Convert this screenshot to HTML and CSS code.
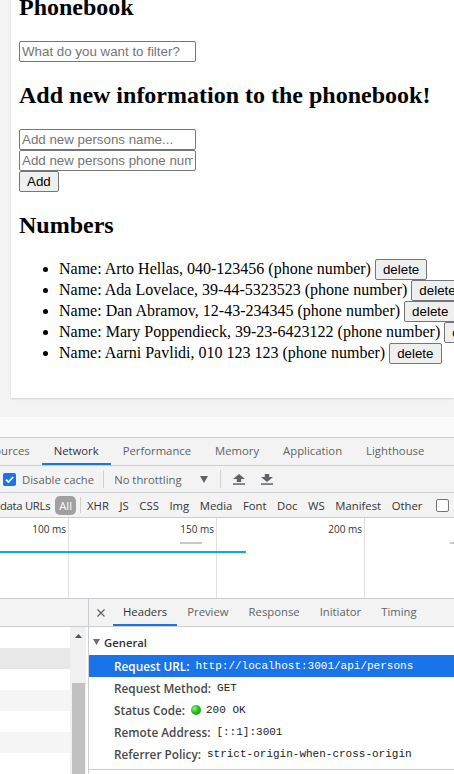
FILE: index.html
```html
<!DOCTYPE html>
<html>
<head>
<meta charset="utf-8">
<title>Phonebook</title>
<link rel="stylesheet" href="styles.css">
</head>
<body>
<div class="screen">
  <div class="viewport">
    <div class="stage">
      <div class="panel">
        <div class="panel-inner">
          <h2>Phonebook</h2>
          <div><input class="field" placeholder="What do you want to filter?"></div>
          <h2>Add new information to the phonebook!</h2>
          <form>
            <div><input class="field" placeholder="Add new persons name..."></div>
            <div><input class="field" placeholder="Add new persons phone number..."></div>
            <div><button class="btn" type="button">Add</button></div>
          </form>
          <h2>Numbers</h2>
          <ul class="list">
            <li>Name: Arto Hellas, 040-123456 (phone number) <button class="btn" type="button">delete</button></li>
            <li>Name: Ada Lovelace, 39-44-5323523 (phone number) <button class="btn" type="button">delete</button></li>
            <li>Name: Dan Abramov, 12-43-234345 (phone number) <button class="btn" type="button">delete</button></li>
            <li>Name: Mary Poppendieck, 39-23-6423122 (phone number) <button class="btn" type="button">delete</button></li>
            <li>Name: Aarni Pavlidi, 010 123 123 (phone number) <button class="btn" type="button">delete</button></li>
          </ul>
        </div>
      </div>
    </div>
  </div>

  <div class="devtools">
    <div class="tabs">
      <div class="tab first">Sources</div>
      <div class="tab active">Network</div>
      <div class="tab">Performance</div>
      <div class="tab">Memory</div>
      <div class="tab">Application</div>
      <div class="tab">Lighthouse</div>
      <div class="ext">
        <svg width="12" height="12" viewBox="0 0 12 12"><rect x="0" y="0" width="12" height="12" rx="1" fill="#6b4fd8"/><rect x="2" y="2" width="8" height="8" rx="1" fill="#8f7ae8"/><path d="M4 4h4v4H4z" fill="#e6e0ff"/></svg>
      </div>
    </div>

    <div class="toolbar">
      <span class="check on"><svg width="13" height="13" viewBox="0 0 13 13"><rect x="0" y="0" width="13" height="13" rx="2" fill="#1a73e8"/><path d="M3 6.6l2.4 2.4L10.2 4" fill="none" stroke="#fff" stroke-width="1.8"/></svg></span>
      <span class="tb-label">Disable cache</span>
      <span class="sep"></span>
      <span class="tb-label throttle">No throttling</span>
      <span class="drop"><svg width="8" height="7" viewBox="0 0 8 7"><path d="M0 0h8L4 7z" fill="#5f6368"/></svg></span>
      <span class="sep sep2"></span>
      <span class="icon up"><svg width="12" height="11" viewBox="0 0 12 11"><path d="M6 0l6 5H8.2v3H3.8V5H0z" fill="#5f6368"/><rect x="0" y="9.3" width="12" height="1.5" fill="#5f6368"/></svg></span>
      <span class="icon down"><svg width="12" height="11" viewBox="0 0 12 11"><path d="M3.8 0h4.4v3H12L6 8 0 3h3.8z" fill="#5f6368"/><rect x="0" y="9.3" width="12" height="1.5" fill="#5f6368"/></svg></span>
    </div>

    <div class="filters">
      <span class="flt-label">data URLs</span>
      <span class="badge">All</span>
      <span class="sep fsep"></span>
      <span class="flt">XHR</span>
      <span class="flt">JS</span>
      <span class="flt">CSS</span>
      <span class="flt">Img</span>
      <span class="flt">Media</span>
      <span class="flt">Font</span>
      <span class="flt">Doc</span>
      <span class="flt">WS</span>
      <span class="flt">Manifest</span>
      <span class="flt">Other</span>
      <span class="box"></span>
    </div>

    <div class="timeline">
      <div class="tcol c1"><span>100 ms</span></div>
      <div class="tcol c2"><span>150 ms</span></div>
      <div class="tcol c3"><span>200 ms</span></div>
      <div class="tcol c4"></div>
      <div class="bar gray"></div>
      <div class="bar blue"></div>
      <div class="bar gray edge"></div>
    </div>

    <div class="split">
      <div class="reqs">
        <div class="reqs-head"></div>
        <div class="reqs-body">
          <div class="rows">
            <div class="row"></div>
            <div class="row sel"></div>
            <div class="row"></div>
            <div class="row alt"></div>
            <div class="row"></div>
            <div class="row alt"></div>
            <div class="row"></div>
          </div>
          <div class="scroll">
            <svg class="arrow" width="7" height="4" viewBox="0 0 7 4"><path d="M0 4L3.5 0 7 4z" fill="#505050"/></svg>
            <div class="thumb"></div>
          </div>
        </div>
      </div>
      <div class="details">
        <div class="dtabs">
          <span class="close"><svg width="8" height="8" viewBox="0 0 8 8"><path d="M0.5 0.5l7 7M7.5 0.5l-7 7" stroke="#5f6368" stroke-width="1.3"/></svg></span>
          <span class="dtab active">Headers</span>
          <span class="dtab">Preview</span>
          <span class="dtab">Response</span>
          <span class="dtab">Initiator</span>
          <span class="dtab">Timing</span>
        </div>
        <div class="general">
          <div class="gtitle"><svg width="7" height="6" viewBox="0 0 7 6"><path d="M0 0h7L3.5 6z" fill="#6e6e6e"/></svg><span>General</span></div>
          <div class="hrow hl"><span class="k">Request URL:</span><span class="v">http://localhost:3001/api/persons</span></div>
          <div class="hrow"><span class="k">Request Method:</span><span class="v">GET</span></div>
          <div class="hrow"><span class="k">Status Code:</span><span class="dot"></span><span class="v">200 OK</span></div>
          <div class="hrow"><span class="k">Remote Address:</span><span class="v">[::1]:3001</span></div>
          <div class="hrow"><span class="k">Referrer Policy:</span><span class="v">strict-origin-when-cross-origin</span></div>
        </div>
      </div>
    </div>
  </div>
</div>
</body>
</html>
```
FILE: styles.css
```css
* { box-sizing: border-box; }
html, body { margin: 0; padding: 0; }
body { width: 454px; height: 774px; overflow: hidden; background: #fff; }

.screen { width: 454px; height: 774px; display: flex; flex-direction: column; overflow: hidden; }

/* ---------- emulated page ---------- */
.viewport { height: 437px; flex: none; background: #fafafa; }
.stage { height: 417px; background: #f3f3f3; padding-left: 11px; overflow: hidden; }
.panel {
  height: 398px; background: #fff; overflow: hidden;
  box-shadow: 0 1px 2px rgba(0,0,0,0.12);
  font-family: "Liberation Serif", "Times New Roman", serif; font-size: 16px; color: #000;
  padding: 0 8px;
}
.panel-inner { margin-top: -26px; }
.panel h2 { font-size: 24px; font-weight: bold; margin: 19.92px 0; white-space: nowrap; }
.panel form { margin: 0; }

.field {
  display: block; width: 177px; height: 21px; margin: 0;
  border: 1px solid #767676; border-radius: 2px; padding: 1px 2px;
  font: 13.33px "Liberation Sans", Arial, sans-serif; color: #000; background: #fff;
}
.field::placeholder { color: #757575; }
.btn {
  height: 21px; margin: 0; padding: 1px 7px;
  border: 1px solid #767676; border-radius: 2px; background: #efefef;
  font: 13.33px "Liberation Sans", Arial, sans-serif; color: #000;
}
.list { margin: 16px 0; padding-left: 40px; }
.list li { height: 21px; line-height: 21px; white-space: nowrap; }

/* ---------- devtools ---------- */
.devtools {
  flex: 1; display: flex; flex-direction: column; min-height: 0;
  border-top: 1px solid #cacdd1; background: #fff;
  font-family: "Open Sans", "Noto Sans", sans-serif; font-size: 11.3px; color: #333;
}
.tabs {
  height: 28px; flex: none; display: flex; background: #f3f3f3;
  border-bottom: 1px solid #cacdd1; white-space: nowrap; overflow: hidden;
}
.tab { padding: 0 12px; display: flex; align-items: center; color: #5f6368; border-bottom: 2px solid transparent; }
.tab.first { margin-left: -24px; }
.tab.active { color: #333; border-bottom-color: #1a73e8; }
.ext { display: flex; align-items: center; padding-left: 19px; }

.toolbar {
  height: 27px; flex: none; display: flex; align-items: center;
  background: #f3f3f3; border-bottom: 1px solid #cacdd1; padding-left: 3px; white-space: nowrap;
}
.check { display: flex; }
.tb-label { margin-left: 6px; color: #5f6368; }
.sep { width: 1px; height: 18px; background: #d0d0d0; margin-left: 9px; }
.throttle { margin-left: 10px; }
.drop { display: flex; margin-left: 18px; }
.sep2 { margin-left: 12px; }
.icon { display: flex; }
.icon.up { margin-left: 12px; }
.icon.down { margin-left: 16px; }

.filters {
  height: 25px; flex: none; display: flex; align-items: center;
  background: #f3f3f3; border-bottom: 1px solid #cacdd1; white-space: nowrap; overflow: hidden;
}
.flt-label { color: #333; letter-spacing: -0.3px; }
.badge {
  margin-left: 5px; height: 19px; padding: 0 4px; border-radius: 5px;
  background: #a0a0a0; color: #fff; display: flex; align-items: center;
}
.fsep { margin-left: 4px; height: 16px; }
.flt { margin-left: 10.6px; color: #333; }
.fsep + .flt { margin-left: 6px; }
.box { margin-left: 14px; width: 13px; height: 13px; border: 1px solid #767676; border-radius: 2px; background: #fff; flex: none; }

.timeline {
  height: 81px; flex: none; display: flex; position: relative;
  border-bottom: 1px solid #cacdd1; background: #fff;
}
.tcol { border-right: 1px solid #e0e0e0; text-align: right; padding: 4px 2px 0 0; font-size: 10px; color: #333; }
.c1 { width: 69px; }
.c2, .c3 { width: 148px; }
.c4 { flex: 1; border-right: 0; }
.bar { position: absolute; height: 2px; }
.bar.gray { left: 180px; width: 22px; top: 24px; background: #c8c8c8; }
.bar.gray.edge { left: 450px; width: 6px; }
.bar.blue { left: 0; width: 246px; top: 33px; background: #03a9f4; }

.split { flex: 1; display: flex; min-height: 0; }
.reqs { width: 89px; flex: none; border-right: 1px solid #cacdd1; display: flex; flex-direction: column; }
.reqs-head { height: 28px; flex: none; background: #f3f3f3; border-bottom: 1px solid #cacdd1; }
.reqs-body { flex: 1; display: flex; }
.rows { width: 70px; }
.row { height: 21px; background: #fff; }
.row.sel { background: #e8e8e8; }
.row.alt { background: #f5f5f5; }
.scroll { width: 16px; background: #f1f1f1; position: relative; display: flex; flex-direction: column; align-items: center; }
.scroll .arrow { margin-top: 7px; }
.thumb { position: absolute; left: 2px; right: 1px; top: 56px; bottom: 0; background: #c1c1c1; }

.details { flex: 1; min-width: 0; display: flex; flex-direction: column; }
.dtabs {
  height: 28px; flex: none; display: flex; align-items: stretch;
  background: #f3f3f3; border-bottom: 1px solid #cacdd1; white-space: nowrap;
}
.close { width: 24px; display: flex; align-items: center; justify-content: center; }
.dtab { padding: 0 10px; display: flex; align-items: center; color: #5f6368; border-bottom: 2px solid transparent; }
.dtab.active { color: #333; border-bottom-color: #1a73e8; }

.general { border-bottom: 1px solid #cacdd1; padding-bottom: 4px; }
.gtitle { height: 28px; display: flex; align-items: center; padding-left: 4px; padding-top: 2px; font-weight: 600; color: #333; }
.gtitle svg { margin-right: 4px; }
.hrow { height: 22px; display: flex; align-items: center; padding-left: 25px; white-space: nowrap; }
.hrow .k { font-weight: 600; font-size: 11.8px; color: #4a4a4a; }
.hrow .v { font-family: "Liberation Mono", "DejaVu Sans Mono", monospace; font-size: 11px; color: #222; margin-left: 6px; }
.hrow.hl { background: #1a73e8; }
.hrow.hl .k, .hrow.hl .v { color: #fff; }
.dot {
  width: 10px; height: 10px; border-radius: 50%; margin-left: 6px;
  background: radial-gradient(circle at 35% 35%, #8ef08e 0, #22c022 45%, #0a8a0a 100%);
}
.dot + .v { margin-left: 5px; }
```
